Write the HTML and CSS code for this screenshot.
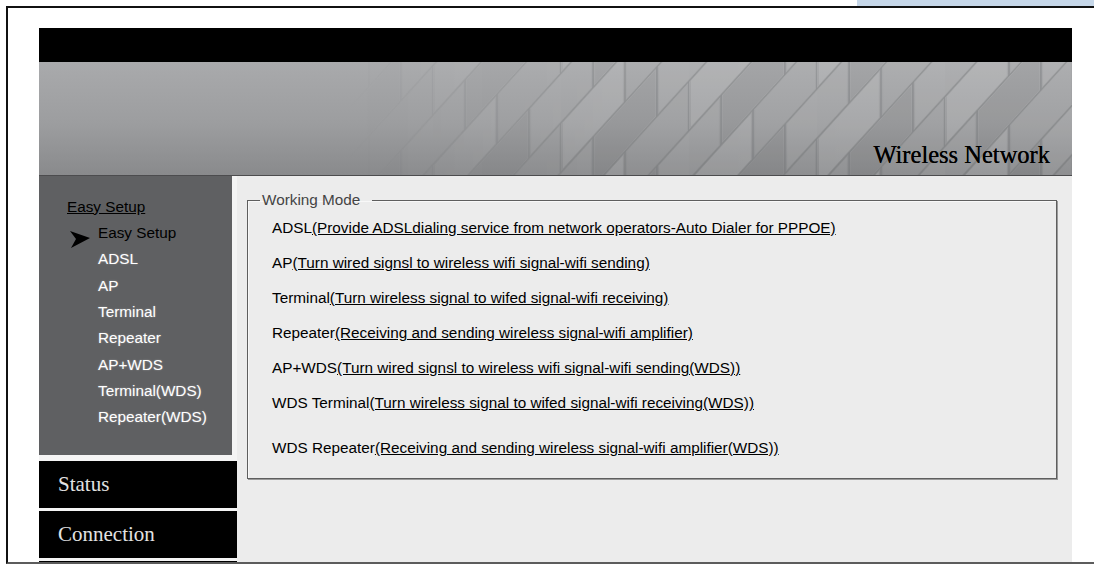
FILE: index.html
```html
<!DOCTYPE html>
<html lang="en">
<head>
<meta charset="utf-8">
<title>Wireless Network</title>
<link rel="stylesheet" href="styles.css">
</head>
<body>
  <div class="tabstrip"><div class="tab"></div></div>
  <div class="frame">
    <div class="app">
      <div class="topbar"></div>
      <div class="banner">
        <svg class="banner-art" viewBox="0 0 1033 114" preserveAspectRatio="none" aria-hidden="true">
          <defs>
            <pattern id="cells" width="128" height="100" patternUnits="userSpaceOnUse" patternTransform="translate(10 30) skewY(-48)">
              <rect x="2" y="2" width="60" height="46" fill="#ffffff" fill-opacity="0.13"/>
              <rect x="66" y="2" width="60" height="46" fill="#ffffff" fill-opacity="0.05"/>
              <rect x="-30" y="52" width="60" height="46" fill="#ffffff" fill-opacity="0.07"/>
              <rect x="34" y="52" width="60" height="46" fill="#000000" fill-opacity="0.03"/>
              <rect x="98" y="52" width="60" height="46" fill="#ffffff" fill-opacity="0.09"/>
              <path d="M0 0H128M0 50H128M0 100H128M64 0V50M128 0V50M32 50V100M96 50V100" stroke="#6a6b6d" stroke-opacity="0.4" stroke-width="1.5" fill="none"/>
            </pattern>
            <linearGradient id="fade" x1="0" x2="1" y1="0" y2="0">
              <stop offset="0.3" stop-color="#fff" stop-opacity="0"/>
              <stop offset="0.55" stop-color="#fff" stop-opacity="0.85"/>
              <stop offset="1" stop-color="#fff" stop-opacity="1"/>
            </linearGradient>
            <mask id="fade-mask">
              <rect width="1033" height="114" fill="url(#fade)"/>
            </mask>
          </defs>
          <rect width="1033" height="114" fill="url(#cells)" mask="url(#fade-mask)"/>
        </svg>
        <h1 class="banner-title">Wireless Network</h1>
      </div>
      <div class="layout">
        <aside class="side">
          <div class="menu">
            <a class="menu-title" href="#">Easy Setup</a>
            <ul class="modes">
              <li class="current">
                <svg class="pointer" viewBox="0 0 20 17" aria-hidden="true"><polygon points="0,0 20,7 1,17 6,8" fill="#000"/></svg>
                <span>Easy Setup</span>
              </li>
              <li>ADSL</li>
              <li>AP</li>
              <li>Terminal</li>
              <li>Repeater</li>
              <li>AP+WDS</li>
              <li>Terminal(WDS)</li>
              <li>Repeater(WDS)</li>
            </ul>
          </div>
          <a class="nav-item" href="#">Status</a>
          <a class="nav-item" href="#">Connection</a>
          <a class="nav-item" href="#"></a>
        </aside>
        <main class="main">
          <fieldset class="modes-box">
            <legend>Working Mode</legend>
            <p class="mode">ADSL<a href="#">(Provide ADSLdialing service from network operators-Auto Dialer for PPPOE)</a></p>
            <p class="mode">AP<a href="#">(Turn wired signsl to wireless wifi signal-wifi sending)</a></p>
            <p class="mode">Terminal<a href="#">(Turn wireless signal to wifed signal-wifi receiving)</a></p>
            <p class="mode">Repeater<a href="#">(Receiving and sending wireless signal-wifi amplifier)</a></p>
            <p class="mode">AP+WDS<a href="#">(Turn wired signsl to wireless wifi signal-wifi sending(WDS))</a></p>
            <p class="mode">WDS Terminal<a href="#">(Turn wireless signal to wifed signal-wifi receiving(WDS))</a></p>
            <p class="mode mode-last">WDS Repeater<a href="#">(Receiving and sending wireless signal-wifi amplifier(WDS))</a></p>
          </fieldset>
        </main>
      </div>
    </div>
  </div>
</body>
</html>
```

FILE: styles.css
```css
html, body {
  margin: 0;
  padding: 0;
  background: #ffffff;
  height: 565px;
  overflow: hidden;
}

body {
  font-family: "Liberation Sans", Arial, sans-serif;
  font-size: 15.3px;
  color: #111;
}

/* browser tab strip above the window frame */
.tabstrip {
  height: 6px;
  display: flex;
}

.tab {
  margin-left: auto;
  width: 237px;
  background: #c6d7e9;
}

.frame {
  margin-left: 6px;
  height: 558px;
  box-sizing: border-box;
  border-top: 2px solid #111;
  border-left: 2px solid #111;
  border-bottom: 2px solid #5c5c5c;
  padding: 20px 0 0 31px;
  overflow: hidden;
}

.app {
  width: 1033px;
  height: 100%;
  display: flex;
  flex-direction: column;
}

.topbar {
  height: 34px;
  background: #000;
  flex: none;
}

/* header banner: gradient with a faded cell pattern, title bottom-right */
.banner {
  height: 113px;
  flex: none;
  display: grid;
  background: linear-gradient(to bottom, #a9aaac 0%, #9c9d9f 55%, #898a8c 100%);
  border-bottom: 1px solid #4c4c4e;
}

.banner-art {
  grid-area: 1 / 1;
  width: 100%;
  height: 100%;
}

.banner-title {
  grid-area: 1 / 1;
  align-self: end;
  justify-self: end;
  margin: 0 22px 6px 0;
  font-family: "Liberation Serif", "Times New Roman", serif;
  font-weight: normal;
  font-size: 24.5px;
  line-height: 28px;
  color: #000;
  text-shadow: 0 0 0.6px #000;
}

.layout {
  flex: 1;
  min-height: 0;
  display: flex;
}

.side {
  width: 198px;
  flex: none;
  background: #f4f4f4;
  display: flex;
  flex-direction: column;
}

.menu {
  width: 193px;
  height: 279px;
  flex: none;
  box-sizing: border-box;
  background: #5f6062;
  padding: 18px 0 0 28px;
  margin-bottom: 6px;
}

.menu-title {
  display: block;
  line-height: 26px;
  color: #000;
  text-decoration: underline;
}

.modes {
  list-style: none;
  margin: 0;
  padding: 0 0 0 31px;
}

.modes li {
  height: 26.3px;
  line-height: 26px;
  color: #fff;
  text-shadow: 0 0 2px rgba(255, 255, 255, 0.35);
  display: flex;
  align-items: center;
}

.modes li.current {
  color: #000;
  text-shadow: none;
}

.pointer {
  width: 20px;
  height: 17px;
  margin-left: -28px;
  margin-right: 8px;
  margin-top: 13px;
  flex: none;
}

.nav-item {
  display: block;
  height: 47px;
  flex: none;
  box-sizing: border-box;
  background: #000;
  color: #e2e2e2;
  font-family: "Liberation Serif", "Times New Roman", serif;
  font-size: 21px;
  line-height: 47px;
  padding-left: 19px;
  text-decoration: none;
  margin-bottom: 3px;
}

.main {
  flex: 1;
  background: #ececec;
  padding: 16px 15px 0 10px;
}

.modes-box {
  margin: 0;
  padding: 10px 0 20px 24px;
  border: 1px solid #5e5e5e;
  box-shadow: 1px 1px 0 #9a9a9a, inset 1px 1px 0 #f8f8f8;
}

.modes-box legend {
  margin-left: -12px;
  padding: 0 12px 0 2px;
  line-height: 16px;
  color: #444;
}

.mode {
  margin: 15px 0 0 0;
  line-height: 20px;
  color: #000;
}

.mode:first-of-type {
  margin-top: 0;
}

.mode-last {
  margin-top: 25px;
}

.mode a {
  color: #000;
  text-decoration: underline;
}
```
